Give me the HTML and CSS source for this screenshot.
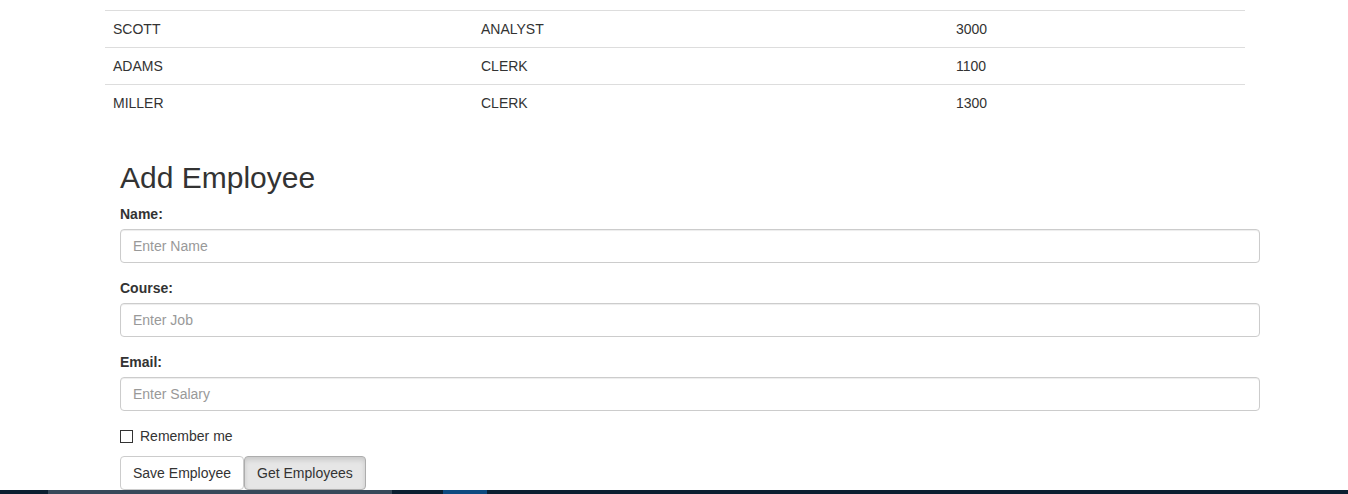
FILE: index.html
```html
<!DOCTYPE html>
<html>
<head>
<meta charset="utf-8">
<link rel="stylesheet" href="styles.css">
</head>
<body>
<div class="table-wrap">
  <table class="emp-table">
    <colgroup><col class="c1"><col class="c2"><col class="c3"></colgroup>
    <tbody>
      <tr><td>SCOTT</td><td>ANALYST</td><td>3000</td></tr>
      <tr><td>ADAMS</td><td>CLERK</td><td>1100</td></tr>
      <tr><td>MILLER</td><td>CLERK</td><td>1300</td></tr>
    </tbody>
  </table>
</div>
<div class="form-wrap">
  <h2 class="title">Add Employee</h2>
  <form class="emp-form">
    <div class="form-group">
      <label class="lbl" for="name">Name:</label>
      <input class="form-control" id="name" type="text" placeholder="Enter Name">
    </div>
    <div class="form-group">
      <label class="lbl" for="job">Course:</label>
      <input class="form-control" id="job" type="text" placeholder="Enter Job">
    </div>
    <div class="form-group">
      <label class="lbl" for="sal">Email:</label>
      <input class="form-control" id="sal" type="text" placeholder="Enter Salary">
    </div>
    <div class="checkbox">
      <label class="chk-label"><span class="chk-box"></span>Remember me</label>
    </div>
    <div class="btns"><button type="button" class="btn">Save Employee</button><button type="button" class="btn btn-active">Get Employees</button></div>
  </form>
</div>
<div class="taskbar">
  <div class="seg dark s1"></div>
  <div class="seg gray s2"></div>
  <div class="seg dark s3"></div>
  <div class="seg blue s4"></div>
  <div class="seg dark s5"></div>
</div>
</body>
</html>
```
FILE: styles.css
```css
html, body {
  margin: 0;
  padding: 0;
  background: #fff;
}
body {
  font-family: "Liberation Sans", Arial, Helvetica, sans-serif;
  font-size: 14px;
  line-height: 20px;
  color: #333;
  width: 1348px;
  height: 494px;
  overflow: hidden;
}
.table-wrap {
  padding: 10px 0 20px 105px;
}
.emp-table {
  width: 1140px;
  border-collapse: collapse;
  border-spacing: 0;
  table-layout: fixed;
  margin: 0;
}
.c1 { width: 368px; }
.c2 { width: 475px; }
.c3 { width: 297px; }
.emp-table td {
  padding: 8px;
  border-top: 1px solid #ddd;
  line-height: 20px;
  vertical-align: top;
}
.form-wrap {
  padding: 20px 0 0 120px;
  width: 1140px;
}
.title {
  font-size: 30px;
  font-weight: 500;
  line-height: 33px;
  margin: 0 0 10px;
  color: #333;
}
.emp-form {
  margin: 0;
}
.form-group {
  margin-bottom: 15px;
}
.lbl {
  display: block;
  font-weight: bold;
  margin-bottom: 5px;
}
.form-control {
  display: block;
  box-sizing: border-box;
  width: 1140px;
  height: 34px;
  padding: 6px 12px;
  font-family: inherit;
  font-size: 14px;
  line-height: 20px;
  color: #555;
  background: #fff;
  border: 1px solid #ccc;
  border-radius: 4px;
  box-shadow: inset 0 1px 1px rgba(0,0,0,.075);
  margin: 0;
}
.form-control::placeholder {
  color: #999;
}
.checkbox {
  margin: 0 0 10px;
}
.chk-label {
  display: flex;
  align-items: center;
  height: 20px;
  font-weight: normal;
}
.chk-box {
  display: inline-block;
  width: 11px;
  height: 11px;
  border: 1px solid #333;
  background: #fff;
  margin-right: 7px;
}
.btns {
  display: flex;
  height: 34px;
}
.btn {
  box-sizing: border-box;
  height: 34px;
  padding: 6px 12px;
  font-family: inherit;
  font-size: 14px;
  line-height: 20px;
  color: #333;
  background: #fff;
  border: 1px solid #ccc;
  border-radius: 4px;
  margin: 0;
  cursor: pointer;
}
.btn-active {
  background: #e6e6e6;
  border-color: #adadad;
  box-shadow: inset 0 3px 5px rgba(0,0,0,.125);
}
.taskbar {
  display: flex;
  height: 4px;
}
.seg { height: 4px; }
.dark { background: #0b1f31; }
.gray { background: #37495a; }
.blue { background: #0e4a80; }
.s1 { width: 48px; }
.s2 { width: 344px; }
.s3 { width: 51px; }
.s4 { width: 44px; }
.s5 { flex: 1; }
```
